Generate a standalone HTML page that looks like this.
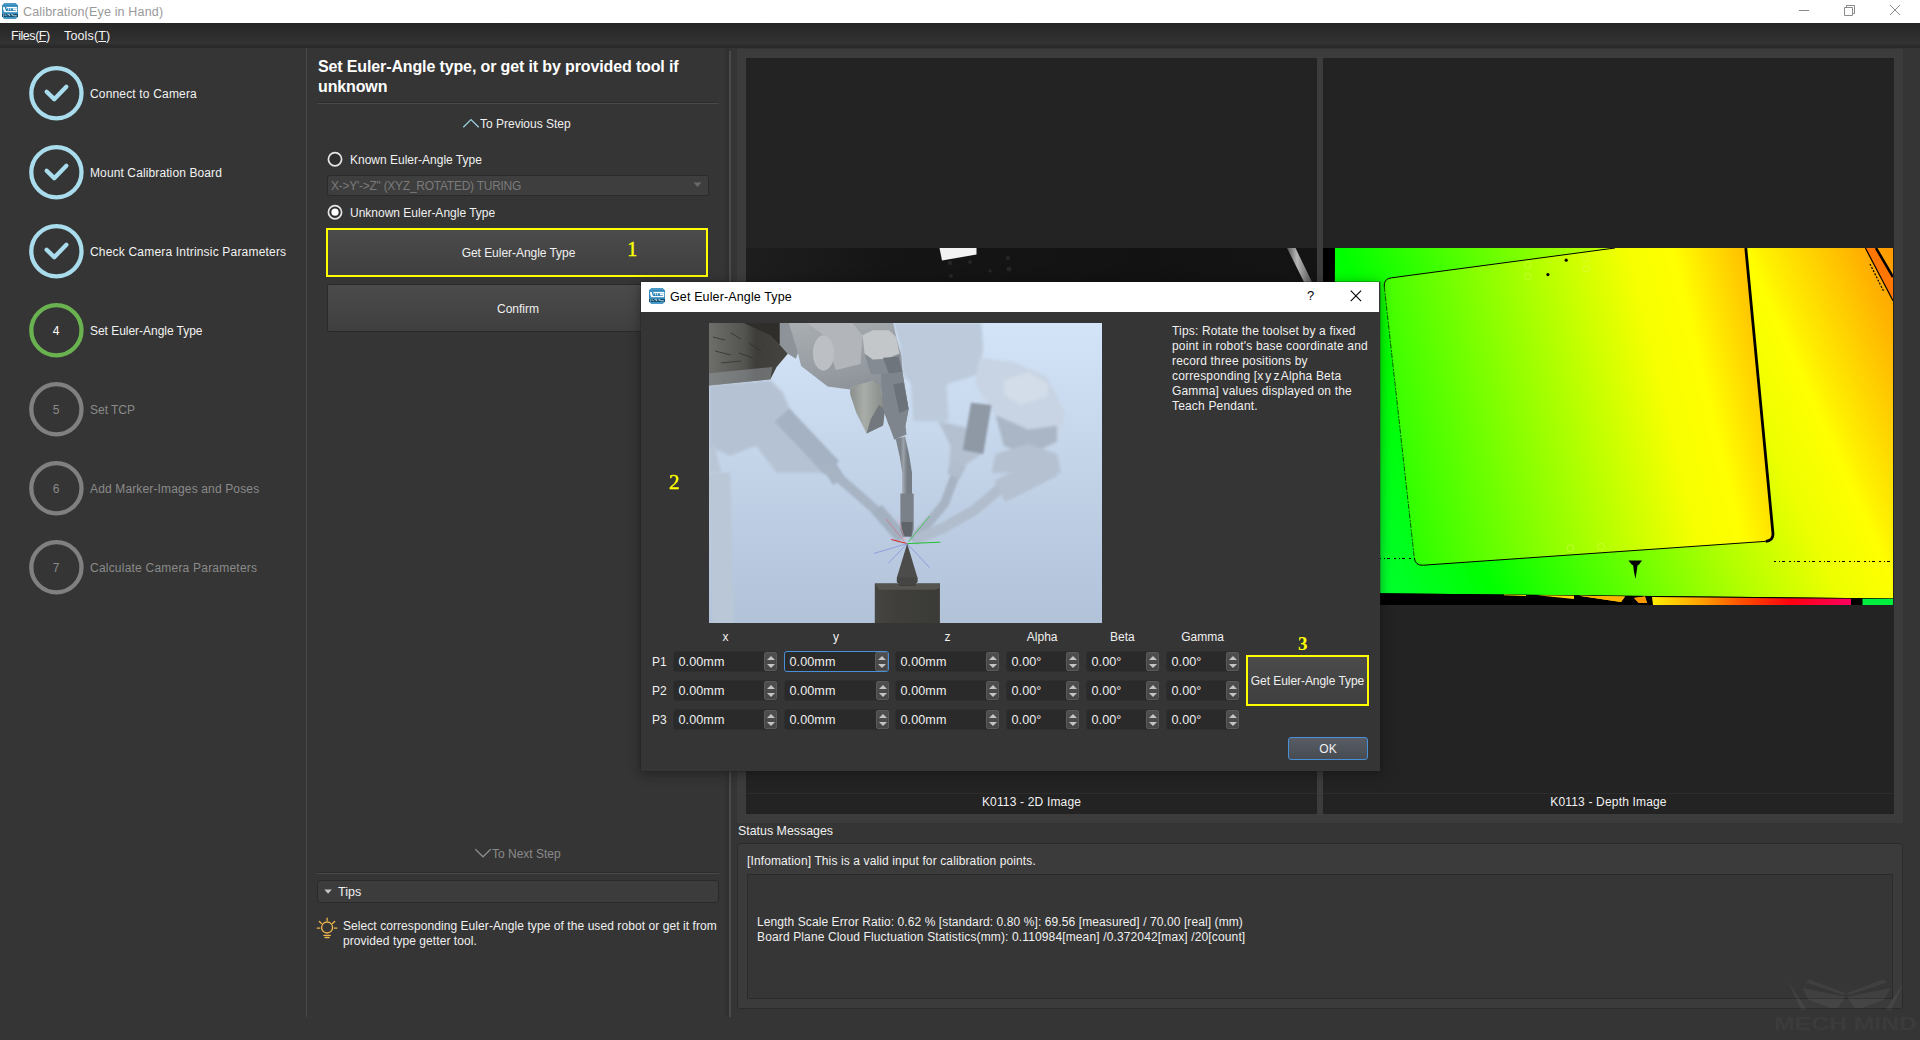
<!DOCTYPE html>
<html>
<head>
<meta charset="utf-8">
<title>Calibration(Eye in Hand)</title>
<style>
*{box-sizing:border-box;margin:0;padding:0}
html,body{width:1920px;height:1040px;overflow:hidden;background:#353535}
body{font-family:"Liberation Sans",sans-serif;font-size:12px;color:#f0f0f0;position:relative}
.abs{position:absolute}
.t{position:absolute;white-space:nowrap;line-height:14px}
#titlebar{left:0;top:0;width:1920px;height:23px;background:#fff}
#menubar{left:0;top:23px;width:1920px;height:25px;background:linear-gradient(#252525 0,#2b2b2b 35%,#323232 84%,#2c2c2c 88%,#292929 100%)}
.step-label{left:90px;color:#f2f2f2}
.step-label.dim{color:#8a8a8a}
.btn{position:absolute;background:linear-gradient(#4b4b4b,#3f3f3f);border:1px solid #2a2a2a;border-radius:2px;color:#f0f0f0;text-align:center}
.spin{position:absolute;height:21px;background:#2a2a2a;border:1px solid #2f2f2f;border-radius:3px}
.spin .v{position:absolute;left:4.5px;top:3px;line-height:14px;font-size:12.6px;letter-spacing:0.08px;color:#f0f0f0}
.spin .b{position:absolute;right:-1px;top:0;width:13px;height:19px;background:linear-gradient(#4e4e4e,#464646);border:1px solid #5a5a5a;border-radius:2px}
.spin .b:before{content:"";position:absolute;left:1.5px;top:3px;border:4px solid transparent;border-top:0;border-bottom:4px solid #c4c4c4}
.spin .b:after{content:"";position:absolute;left:1.5px;top:11px;border:4px solid transparent;border-bottom:0;border-top:4px solid #c4c4c4}
</style>
</head>
<body>
<!-- TITLE BAR -->
<div id="titlebar" class="abs">
<svg class="abs" style="left:2px;top:3px" width="16" height="16" viewBox="0 0 16 16"><path d="M2.6 0h10.800L16 2.600v10.800L13.400 16H2.600L0 13.400V2.600z" fill="#3389bb"/><path d="M2.600 0h10.800l2 2H.600z" fill="#4b99c7"/><path d="M.500 14.300h15L13.400 16H2.600z" fill="#4b99c7"/><rect x="0" y="11" width="16" height="2.900" fill="#0c4c6e"/><path d="M1.200 11.600l1 .800-1 .900M3.200 11.500l1.200 1.600M5.500 11.700h2.200v1.400M9.300 11.800h1.800v1.200M11.800 12.800h3" stroke="#fff" stroke-width=".800" fill="none"/><rect x="1.100" y="3.900" width="14.100" height="5.300" fill="#fff"/><path d="M1.100 6.200v3h1.300z" fill="#3389bb"/><path d="M2.700 3.900l.900 3.600 1-3.600z" fill="#3389bb"/><path d="M4.500 5.300l-.800 2.800h10.400v-.800H11V5.300z" fill="#3389bb"/><path d="M6 5.300v1.900h.800V5.300zM8.100 5.300v1.900h.800V5.300z" fill="#eaf3f9"/><rect x="11.200" y="5.300" width="4" height=".700" fill="#9cc5de"/></svg>
<div class="t" style="left:23px;top:5px;font-size:12.5px;letter-spacing:0.17px;color:#999">Calibration(Eye in Hand)</div>
<svg class="abs" style="left:1780px;top:0" width="140" height="23" viewBox="0 0 140 23"><g stroke="#8a8a8a" stroke-width="1" fill="none"><path d="M19 10.5h10"/><path d="M64.5 7.5h8v8h-8z M66.5 7.5v-2h8v8h-2"/><path d="M110 5l10 10M120 5l-10 10"/></g></svg>
</div>
<!-- MENU BAR -->
<div id="menubar" class="abs">
<div class="t" style="left:11px;top:6px;font-size:12.5px;letter-spacing:-0.45px;color:#f4f4f4">Files(<u>F</u>)</div>
<div class="t" style="left:64px;top:6px;font-size:12.5px;letter-spacing:0.15px;color:#f4f4f4">Tools(<u>T</u>)</div>
</div>
<!-- LEFT STEPS -->
<div id="steps">
<svg class="abs" style="left:0;top:48px" width="306" height="992" viewBox="0 48 306 992">
<circle cx="56.4" cy="93.2" r="25.1" fill="none" stroke="#a9dcec" stroke-width="4.3"/><path d="M46.65 91.75L54.25 99.15L66.35 86.85" fill="none" stroke="#a9dcec" stroke-width="4.3" stroke-linecap="round" stroke-linejoin="round"/>
<circle cx="56.4" cy="172.2" r="25.1" fill="none" stroke="#a9dcec" stroke-width="4.3"/><path d="M46.65 170.75L54.25 178.15L66.35 165.85" fill="none" stroke="#a9dcec" stroke-width="4.3" stroke-linecap="round" stroke-linejoin="round"/>
<circle cx="56.4" cy="251.2" r="25.1" fill="none" stroke="#a9dcec" stroke-width="4.3"/><path d="M46.65 249.75L54.25 257.15L66.35 244.85" fill="none" stroke="#a9dcec" stroke-width="4.3" stroke-linecap="round" stroke-linejoin="round"/>
<circle cx="56.4" cy="330.2" r="25.1" fill="none" stroke="#6ab150" stroke-width="4.3"/>
<circle cx="56.4" cy="409.2" r="25.1" fill="none" stroke="#808080" stroke-width="4.3"/>
<circle cx="56.4" cy="488.2" r="25.1" fill="none" stroke="#808080" stroke-width="4.3"/>
<circle cx="56.4" cy="567.2" r="25.1" fill="none" stroke="#808080" stroke-width="4.3"/>
</svg>
<div class="t step-label" style="top:87px;letter-spacing:0.167px">Connect to Camera</div>
<div class="t step-label" style="top:166px;letter-spacing:0.113px">Mount Calibration Board</div>
<div class="t step-label" style="top:245px;letter-spacing:0.188px">Check Camera Intrinsic Parameters</div>
<div class="t" style="left:46px;width:20px;text-align:center;top:324px;color:#fff">4</div>
<div class="t step-label" style="top:324px;letter-spacing:-0.034px">Set Euler-Angle Type</div>
<div class="t" style="left:46px;width:20px;text-align:center;top:403px;color:#8a8a8a">5</div>
<div class="t step-label dim" style="top:403px;letter-spacing:-0.020px">Set TCP</div>
<div class="t" style="left:46px;width:20px;text-align:center;top:482px;color:#8a8a8a">6</div>
<div class="t step-label dim" style="top:482px;letter-spacing:0.144px">Add Marker-Images and Poses</div>
<div class="t" style="left:46px;width:20px;text-align:center;top:561px;color:#8a8a8a">7</div>
<div class="t step-label dim" style="top:561px;letter-spacing:0.215px">Calculate Camera Parameters</div>
<div class="abs" style="left:306px;top:48px;width:1px;height:969px;background:#484848"></div>
</div>
<!-- MIDDLE PANEL -->
<div id="mid">
<div class="t" style="left:318px;top:57px;font-size:16px;font-weight:bold;line-height:20px;letter-spacing:-0.13px;color:#fff;white-space:normal;width:400px">Set Euler-Angle type, or get it by provided tool if unknown</div>
<div class="abs" style="left:317px;top:102px;width:402px;height:1px;background:#2d2d2d"></div>
<div class="abs" style="left:317px;top:103px;width:402px;height:1px;background:#4a4a4a"></div>
<svg class="abs" style="left:462px;top:117px" width="18" height="12" viewBox="0 0 18 12"><path d="M1.3 10.2L9 2.6l7.7 7.6" fill="none" stroke="#9ccfe0" stroke-width="1.3"/></svg>
<div class="t" style="left:480px;top:117px">To Previous Step</div>
<svg class="abs" style="left:326px;top:150px" width="18" height="72" viewBox="0 0 18 72"><circle cx="9" cy="9.2" r="6.6" fill="#2e2e2e" stroke="#e6e6e6" stroke-width="1.7"/><circle cx="9" cy="62.2" r="6.6" fill="#2e2e2e" stroke="#e6e6e6" stroke-width="1.7"/><circle cx="9" cy="62.2" r="3.6" fill="#fff"/></svg>
<div class="t" style="left:350px;top:153px">Known Euler-Angle Type</div>
<div class="abs" style="left:327px;top:175px;width:382px;height:21px;background:#3e3e3e;border:1px solid #2a2a2a;border-radius:3px"></div>
<div class="t" style="left:331px;top:179px;color:#7a7a7a;letter-spacing:-0.26px">X-&gt;Y'-&gt;Z" (XYZ_ROTATED) TURING</div>
<svg class="abs" style="left:693px;top:182px" width="10" height="6" viewBox="0 0 10 6"><path d="M0.5 0.5h8L4.5 5z" fill="#6a6a6a"/></svg>
<div class="t" style="left:350px;top:206px">Unknown Euler-Angle Type</div>
<div class="abs" style="left:326px;top:228px;width:382px;height:49px;background:linear-gradient(#4b4b4b,#3f3f3f);border:2px solid #ffff00"></div>
<div class="t" style="left:327.500px;width:382px;text-align:center;top:246px;letter-spacing:-0.040px">Get Euler-Angle Type</div>
<div class="t" id="n1" style="left:627.300px;top:239.200px;font-family:'Liberation Serif',serif;font-size:20px;line-height:20px;color:#ffff00;-webkit-text-stroke:0.450px #ffff00">1</div>
<div class="btn" style="left:327px;top:284px;width:382px;height:48px"></div>
<div class="t" style="left:327px;width:382px;text-align:center;top:302px">Confirm</div>
<svg class="abs" style="left:474px;top:847px" width="18" height="12" viewBox="0 0 18 12"><path d="M1.3 2.2L9 9.8l7.7-7.6" fill="none" stroke="#8c8c8c" stroke-width="1.3"/></svg>
<div class="t" style="left:492px;top:847px;color:#8a8a8a">To Next Step</div>
<div class="abs" style="left:317px;top:872px;width:402px;height:1px;background:#2d2d2d"></div>
<div class="abs" style="left:317px;top:873px;width:402px;height:1px;background:#4a4a4a"></div>
<div class="abs" style="left:317.400px;top:880.400px;width:401.300px;height:22.300px;background:#3c3c3c;border:1px solid #292929;border-radius:3.500px"></div>
<svg class="abs" style="left:324px;top:889px" width="9" height="6" viewBox="0 0 9 6"><path d="M0.3 0.5h7.6L4.1 4.8z" fill="#c4c4c4"/></svg>
<div class="t" style="left:338px;top:885px;font-size:12.5px">Tips</div>
<svg class="abs" style="left:316px;top:917px" width="22" height="22" viewBox="0 0 22 22" fill="none" stroke="#ecb54e" stroke-width="1.300" stroke-linecap="round"><circle cx="11.100" cy="10.500" r="5.500"/><path d="M7.900 18.300h6.400M9.100 20.500h4M11.100 1.200v2.200M3.300 4.400l2.200 2M18.700 4.400l-2.200 2M1.200 11.100h2.600M18.300 11.100h2.600"/></svg>
<div class="t" style="left:343px;top:919px;line-height:15px;white-space:normal;width:384px;letter-spacing:0.07px">Select corresponding Euler-Angle type of the used robot or get it from provided type getter tool.</div>
<div class="abs" style="left:723px;top:48px;width:6px;height:969px;background:linear-gradient(90deg,#353535,#2f2f2f)"></div>
<div class="abs" style="left:729px;top:51px;width:2px;height:966px;background:#4a4a4a"></div>
</div>
<!-- RIGHT PANEL -->
<div id="right">
<div class="abs" style="left:737px;top:49px;width:1166px;height:774px;background:#3c3c3c"></div>
<div class="abs" id="pane2d" style="left:746px;top:58px;width:571px;height:756px;background:#232323;overflow:hidden">
<svg class="abs" style="left:0;top:190px" width="571" height="357" viewBox="0 0 571 357">
<defs><linearGradient id="g2" x1="0" y1="0" x2="1" y2="0"><stop offset="0" stop-color="#1e1e1e"/><stop offset="0.25" stop-color="#151515"/><stop offset="0.7" stop-color="#121212"/><stop offset="1" stop-color="#141414"/></linearGradient>
<linearGradient id="gr" x1="0" y1="0" x2="1" y2="0"><stop offset="0" stop-color="#555"/><stop offset="0.4" stop-color="#b8b8b8"/><stop offset="1" stop-color="#5a5a5a"/></linearGradient></defs>
<rect width="571" height="357" fill="url(#g2)"/>
<path d="M193.500 0H230.500V6.500L196 12.500z" fill="#f2f2f2"/>
<g fill="#262626"><circle cx="204" cy="15" r="2.200"/><circle cx="224" cy="14" r="2"/><circle cx="262" cy="10" r="2.200"/><circle cx="244" cy="23" r="1.800"/><circle cx="205" cy="28" r="2"/><circle cx="263" cy="21" r="2.500"/></g>
<path d="M541 0h8.500L566 34h-8z" fill="url(#gr)"/>
</svg>
<div class="abs" style="left:0;top:735px;width:571px;height:1px;background:#2c2c2c"></div>
<div class="t" style="left:0;width:571px;text-align:center;top:737px;color:#f2f2f2;letter-spacing:0.17px">K0113 - 2D Image</div>
</div>
<div class="abs" id="panedepth" style="left:1323px;top:58px;width:571px;height:756px;background:#232323;overflow:hidden">
<svg class="abs" id="depthimg" style="left:0;top:190px" width="570" height="357" viewBox="0 0 570 357">
<defs>
<linearGradient id="gd" gradientUnits="userSpaceOnUse" x1="-182.7" y1="81.3" x2="475" y2="-211.5"><stop offset="0" stop-color="#00ff70"/><stop offset="0.157" stop-color="#00ff30"/><stop offset="0.2986" stop-color="#00ff00"/><stop offset="0.6125" stop-color="#b0ff00"/><stop offset="0.736" stop-color="#edff00"/><stop offset="0.8125" stop-color="#ffff00"/><stop offset="0.836" stop-color="#fff000"/><stop offset="0.915" stop-color="#ffc700"/><stop offset="1" stop-color="#ff9900"/></linearGradient>
<linearGradient id="gb" gradientUnits="userSpaceOnUse" x1="-145.8" y1="35" x2="456.8" y2="-109.5"><stop offset="0" stop-color="#00ff30"/><stop offset="0.169" stop-color="#00ff00"/><stop offset="0.721" stop-color="#f7ff00"/><stop offset="0.79" stop-color="#ffff00"/><stop offset="0.895" stop-color="#ffc400"/><stop offset="1" stop-color="#ff8c00"/></linearGradient>
<linearGradient id="gs" x1="0" y1="0" x2="1" y2="0">
<stop offset="0" stop-color="#ffee00"/><stop offset="0.25" stop-color="#ffa000"/><stop offset="0.45" stop-color="#ff5000"/><stop offset="0.7" stop-color="#ff0010"/><stop offset="1" stop-color="#ff0060"/>
</linearGradient>
</defs>
<rect width="570" height="357" fill="#000"/>
<path d="M11.5 0H570V351L0 345.5V357H11z" fill="#000"/>
<path d="M12 0H570V350.5L56 345.2 10.5 345z" fill="url(#gd)"/>
<path d="M292 0L68.300 29.850Q60.400 30.900 61.300 38.850L91.300 309.800Q92.200 317.750 100.200 317.200L442.700 293.350Q450.700 292.800 449.900 284.800L422.800 0z" fill="url(#gb)"/>
<path d="M292 0L68.300 29.850Q60.400 30.900 61.300 38.850" stroke="#000" stroke-width="1" fill="none"/>
<path d="M61.300 38.850L91.300 309.800" stroke="#062800" stroke-width="0.900" stroke-dasharray="5 1.500 2 1" fill="none" opacity="0.850"/>
<path d="M91.300 309.800Q92.200 317.750 100.200 317.200L442.700 293.350" stroke="#000" stroke-width="1" fill="none"/>
<path d="M442.700 293.350Q450.700 292.800 449.900 284.800L422.800 0" stroke="#000" stroke-width="2.800" fill="none"/>
<path d="M56 310.500h37M451 313.500h119" stroke="#000" stroke-width="1" stroke-dasharray="2 3 1 2 3 4"/>
<path d="M305.500 312.500h13.500l-3 4-1.500 1-1 7-1 6.500-1.500-7-.8-6.500-2-1.500z" fill="#000"/>
<circle cx="224.900" cy="26.600" r="1.600" fill="#000"/><circle cx="243.200" cy="12.200" r="1.600" fill="#000"/>
<g fill="none" stroke="#d8ff50" stroke-width="0.800" opacity="0.700"><circle cx="204.700" cy="17" r="3.300"/><circle cx="204.700" cy="28.500" r="3.300"/><circle cx="262.400" cy="10.300" r="3.300"/><circle cx="263.300" cy="20.800" r="3.300"/><circle cx="247.500" cy="300.300" r="3.500"/><circle cx="278" cy="298.700" r="3.500"/></g>
<path d="M542.400 0L570 52.800V29L553 0z" fill="#ff7600"/>
<path d="M542.400 0L570 52.800" stroke="#000" stroke-width="1.200"/><path d="M553 0L570 29" stroke="#000" stroke-width="2.500"/><path d="M547 16l14 28" stroke="#000" stroke-width="1.200" stroke-dasharray="2 1.500"/>
<path d="M56 345.200L570 350.500V357H56z" fill="#000"/>
<path d="M181 346.500l22 .500v1l-22-.800zM214 347.200l37 .600v3.200zM256 347.800l46 .600-4 5.500zM311 350l11-1.500 2 6.500h-8z" fill="#ffd800"/>
<path d="M256 347.800l46 .600-4 5.500z" fill="#ffb400"/><path d="M311 350l11-1.500 2 6.500h-8z" fill="#ff9800"/>
<path d="M329 349l199 1.800V357H330z" fill="url(#gs)"/>
<rect x="528" y="350.500" width="11.500" height="6.500" fill="#000"/>
<rect x="539.500" y="350.800" width="30.500" height="6.200" fill="#00f040"/>
</svg>
<div class="abs" style="left:0;top:735px;width:571px;height:1px;background:#2c2c2c"></div>
<div class="t" style="left:0;width:571px;text-align:center;top:737px;color:#f2f2f2;letter-spacing:0.17px">K0113 - Depth Image</div>
</div>
<div class="t" style="left:738px;top:824px;font-size:12.4px">Status Messages</div>
<div class="abs" style="left:737px;top:843px;width:1166px;height:166px;background:#3b3b3b;border:1px solid #2b2b2b;border-radius:3px"></div>
<div class="t" style="left:747px;top:854px;letter-spacing:0.12px">[Infomation] This is a valid input for calibration points.</div>
<div class="abs" style="left:747px;top:874px;width:1146px;height:125px;background:#363636;border:1px solid #2a2a2a"></div>
<div class="t" style="left:757px;top:915px;line-height:15px;letter-spacing:0.094px">Length Scale Error Ratio: 0.62 % [standard: 0.80 %]: 69.56 [measured] / 70.00 [real] (mm)</div>
<div class="t" style="left:757px;top:930px;line-height:15px;letter-spacing:0.135px">Board Plane Cloud Fluctuation Statistics(mm): 0.110984[mean] /0.372042[max] /20[count]</div>
<svg class="abs" style="left:1760px;top:960px" width="160" height="80" viewBox="0 0 160 80" fill="rgba(255,255,255,0.05)">
<path d="M27.500 20.800L46.700 49.200 41.700 50.800zM49.200 19.200L85.800 33.300 83.300 35 45.800 22.500zM42.500 27.900L85.800 36.700 77.500 48.300 71 48.300 48 39.500z"/>
<path d="M145 20.800L125.800 49.200 130.800 50.800zM123.300 19.200L86.700 33.300 89.200 35 126.700 22.500zM130 27.900L86.700 36.700 95 48.300 101.500 48.300 124.500 39.500z"/>
<text x="14" y="70.300" font-family="Liberation Sans, sans-serif" font-weight="bold" font-size="17.500" textLength="143" lengthAdjust="spacingAndGlyphs">MECH MIND</text>
<text x="55" y="79.500" font-family="Liberation Sans, sans-serif" font-size="5" textLength="62" lengthAdjust="spacingAndGlyphs" fill="rgba(255,255,255,0.03)">Robotics Technologies</text>
</svg>
</div>
<!-- DIALOG -->
<div id="dialog">
<div class="abs" style="left:641px;top:282px;width:738.500px;height:489.300px;background:#353535;box-shadow:0 0 0 0.500px rgba(30,30,30,0.500),0 2px 11px 1px rgba(0,0,0,0.340)"></div>
<div class="abs" style="left:641px;top:282px;width:738px;height:30px;background:#fff"></div>
<svg class="abs" style="left:649px;top:288px" width="16" height="16" viewBox="0 0 16 16"><path d="M2.6 0h10.800L16 2.600v10.800L13.400 16H2.600L0 13.400V2.600z" fill="#3389bb"/><path d="M2.600 0h10.800l2 2H.600z" fill="#4b99c7"/><path d="M.500 14.300h15L13.400 16H2.600z" fill="#4b99c7"/><rect x="0" y="11" width="16" height="2.900" fill="#0c4c6e"/><path d="M1.200 11.600l1 .800-1 .900M3.200 11.500l1.200 1.600M5.500 11.700h2.200v1.400M9.300 11.800h1.800v1.200M11.800 12.800h3" stroke="#fff" stroke-width=".800" fill="none"/><rect x="1.100" y="3.900" width="14.100" height="5.300" fill="#fff"/><path d="M1.100 6.200v3h1.300z" fill="#3389bb"/><path d="M2.700 3.900l.900 3.600 1-3.600z" fill="#3389bb"/><path d="M4.500 5.300l-.800 2.800h10.400v-.800H11V5.300z" fill="#3389bb"/><path d="M6 5.300v1.900h.800V5.300zM8.100 5.300v1.900h.800V5.300z" fill="#eaf3f9"/><rect x="11.200" y="5.300" width="4" height=".700" fill="#9cc5de"/></svg>
<div class="t" style="left:670px;top:290px;font-size:12.5px;letter-spacing:0.13px;color:#000">Get Euler-Angle Type</div>
<div class="t" style="left:1307px;top:289px;font-size:13px;color:#000">?</div>
<svg class="abs" style="left:1350px;top:290px" width="12" height="12" viewBox="0 0 12 12"><path d="M0.7 0.7l10.4 10.4M11.1 0.7L0.7 11.1" stroke="#000" stroke-width="1.1"/></svg>
<svg class="abs" id="robot" style="left:709px;top:323px" width="393" height="300" viewBox="0 0 393 300">
<defs>
<linearGradient id="rbg" x1="0" y1="0" x2="0" y2="1"><stop offset="0" stop-color="#d3e3f8"/><stop offset="0.45" stop-color="#c4d5ea"/><stop offset="1" stop-color="#b1c2d9"/></linearGradient>
<linearGradient id="arm" x1="0" y1="0" x2="0.3" y2="1"><stop offset="0" stop-color="#a9aeb3"/><stop offset="0.5" stop-color="#979ca2"/><stop offset="1" stop-color="#80868d"/></linearGradient>
<linearGradient id="tube" x1="0" y1="0" x2="1" y2="0"><stop offset="0" stop-color="#7e848c"/><stop offset="0.45" stop-color="#9ba1a9"/><stop offset="1" stop-color="#767c84"/></linearGradient>
<linearGradient id="cyl" x1="0" y1="0" x2="1" y2="0"><stop offset="0" stop-color="#8a8f8c"/><stop offset="0.4" stop-color="#a9ada8"/><stop offset="1" stop-color="#858a88"/></linearGradient>
<linearGradient id="box" x1="0" y1="0" x2="1" y2="0"><stop offset="0" stop-color="#454542"/><stop offset="0.3" stop-color="#403f3c"/><stop offset="1" stop-color="#3a3a37"/></linearGradient>
<linearGradient id="blk" x1="0" y1="0" x2="1" y2="0"><stop offset="0" stop-color="#6d6d69"/><stop offset="0.45" stop-color="#53534f"/><stop offset="0.6" stop-color="#3e3d3a"/><stop offset="1" stop-color="#45443f"/></linearGradient>
<filter id="b1" x="-10%" y="-10%" width="120%" height="120%"><feGaussianBlur stdDeviation="0.9"/></filter>
<filter id="b2" x="-10%" y="-10%" width="120%" height="120%"><feGaussianBlur stdDeviation="1.8"/></filter>
</defs>
<rect width="393" height="300" fill="url(#rbg)"/>
<g filter="url(#b2)">
<path d="M184.2 0.0L272.3 0.0L274.3 24.6L270.2 51.2L237.5 61.4L239.5 98.3L204.7 98.3L201.6 59.4L193.4 51.2L190.4 20.5z" fill="#bccadb"/>
<path d="M270.2 34.8L303.0 38.9L337.8 53.2L356.2 90.1L348.0 118.7L319.3 132.0L294.8 122.8L286.6 92.1L266.1 61.4z" fill="#c8d4e3"/>
<path d="M294.8 57.3L319.3 49.1L339.8 61.4L337.8 73.7L311.2 81.9L294.8 71.6z" fill="#d3dde9"/>
<path d="M286.6 92.1L319.3 106.4L348.0 102.4L348.0 118.7L319.3 132.0L294.8 122.8z" fill="#aab6c5"/>
<path d="M229.3 98.3L266.1 106.4L272.3 131.0L245.6 150.1L239.5 150.1L241.6 122.8z" fill="#b4c0cf"/>
<path d="M286.6 131.0L319.3 120.8L348.0 131.0L352.1 150.1L335.7 150.1L303.0 150.1L282.5 150.1z" fill="#b5c1d0"/>
<path d="M0.0 61.4L61.4 57.3L73.7 69.6L86.0 98.3L118.7 131.0L131.0 150.1L67.6 150.1L47.1 122.8L20.5 133.1L0.0 122.8z" fill="#b5c2d3"/>
<path d="M0.0 122.8L6.1 122.8L12.3 150.1L0.0 150.1z" fill="#b9c6d6"/>
</g>
<g filter="url(#b1)" fill="none">
<path d="M10.2 150.0L14.3 300.1" stroke="#bac7d7" stroke-width="22"/>
<path d="M73 92L123 145" stroke="#a5b2c3" stroke-width="20"/>
<path d="M118 140L130 158" stroke="#a5b2c3" stroke-width="14"/>
<path d="M114.6 141.8L143.3 166.4L169.9 189.9" stroke="#a7b4c4" stroke-width="9.500"/>
<path d="M167.9 186.4L193.4 215.5" stroke="#a3b0c0" stroke-width="13"/>
<path d="M248.7 145.9L235.4 180.7L221.1 198.1L202.7 217.1" stroke="#a7b3c3" stroke-width="9"/>
<path d="M294.8 162.3L266.1 186.8L235.4 204.2L205.7 217.1" stroke="#b1bdcc" stroke-width="10.500"/>
<path d="M343.9 141.8L290.7 168.4" stroke="#b5c1d0" stroke-width="24"/>
<path d="M241.6 143.9L253.8 150.0" stroke="#b1bdcc" stroke-width="14"/>
</g>
<path d="M262.0 79.8L282.5 81.9L274.3 131.0L253.8 126.9z" fill="#8f99a6" filter="url(#b1)"/>
<path d="M70.6 0.0L98.3 0.0L90.1 26.6L87.0 35.8L78.8 30.7L70.6 21.5z" fill="#8d9399"/>
<path d="M0.0 0.0L70.6 0.0L70.6 21.5L78.8 30.7L67.6 44.0L61.4 56.3L0.0 62.4z" fill="url(#blk)"/>
<path d="M34.8 0.0L70.6 0.0L70.6 21.5L61.4 12.3z" fill="#2f2e2b"/>
<path d="M0.0 50.2L63.5 44.0L61.4 56.3L0.0 62.4z" fill="#8f959b" opacity="0.55"/>
<g stroke="#2c2c29" stroke-width="1" opacity="0.7"><path d="M4 14l12 3M6 28l16 4M22 10l10 6M30 30l14 5M12 40l20-2M40 20l12 8"/></g>
<path d="M79.8 0.0L184.2 0.0L187.3 14.3L192.4 32.8L193.4 49.1L199.6 86.0L196.5 102.4L185.3 107.5L180.1 102.4L174.0 86.0L172.0 67.6L163.8 58.3L144.3 63.5L141.2 66.5L118.7 63.5L92.1 43.0L88.0 26.6z" fill="url(#arm)"/>
<ellipse cx="114.500" cy="30" rx="10.500" ry="17.500" fill="#b7bbbf"/>
<path d="M98.3 0.0L143.3 0.0L153.5 12.3L151.5 40.9L126.9 47.1L114.6 12.3z" fill="#b2b6ba"/>
<ellipse cx="114.500" cy="30" rx="10.500" ry="17.500" fill="#bcc0c4"/>
<path d="M153.5 12.3L163.8 7.2L180.1 7.2L187.3 14.3L190.4 30.7L178.1 35.8L163.8 36.8L155.6 30.7z" fill="#c4c7c9"/>
<path d="M155.6 30.7L163.8 36.8L178.1 35.8L190.4 30.7L193.4 49.1L172.0 51.2L161.7 51.2z" fill="#858b92"/>
<path d="M174.0 34.8L189.4 33.8L193.4 49.1L180.1 51.2z" fill="#6f757c"/>
<path d="M141.2 66.5L145.3 62.4L163.8 58.3L170.9 63.5L176.0 86.0L174.0 102.4L157.6 110.5L147.4 90.1L141.2 71.6z" fill="url(#cyl)"/>
<path d="M157.6 110.5L174.0 102.4L176.0 86.0L169.9 81.9L161.7 96.2z" fill="#72787d"/>
<path d="M172.0 51.2L193.4 49.1L199.6 86.0L196.5 102.4L197.5 111.6L185.3 116.7L180.1 102.4L174.0 86.0z" fill="#7f858c"/>
<path d="M184.2 61.4L194.5 59.4L199.6 86.0L190.4 90.1z" fill="#6c7279"/>
<path d="M191.4 114.6L195.5 133.1L198.2 150.1L198.2 174.0" fill="none" stroke="url(#tube)" stroke-width="9.600"/>
<path d="M191.400 170.500h13.300v36l-2.200 7h-8.500l-2.600-7z" fill="#7b8189"/>
<path d="M192.600 199l1.400 14.500h8.500l1.200-14.500z" fill="#5f646b"/>
<g fill="none" stroke-width="0.800"><path d="M182.200 216.500L198.200 220.600" stroke="#e02020" stroke-width="1"/><path d="M198.200 220.600L231.300 219.200" stroke="#22c032" stroke-width="1"/><path d="M199.600 218.600L220.700 193" stroke="#35c045"/><path d="M164.800 230.500L198.200 220.600 220.700 244.800M179.100 240.500L198.200 220.600" stroke="#8593da"/><path d="M177.100 196L195.500 218.600" stroke="#e05060" stroke-width="0.500"/><path d="M188.300 195l8.200 22.500" stroke="#f0a0b0" stroke-width="0.500"/></g>
<path d="M198.200 220.600L208.400 254.400V259l-3 2.600h-14.500l-3-2.600v-4.600z" fill="#4c4c4b"/>
<path d="M165.800 260.500h65.100V300h-65.100z" fill="url(#box)"/>
<path d="M165.800 260.500h22.100v0l3 2.400h14.500l3-2.400h22.500v4l-4 2.200H170z" fill="#55544f"/>
<path d="M187.900 254.400h20.500V259l-3 2.900h-14.500l-3-2.900z" fill="#454544"/>
</svg>
<div class="t" id="n2" style="left:668.600px;top:471.800px;font-family:'Liberation Serif',serif;font-size:20px;line-height:20px;color:#ffff00;-webkit-text-stroke:0.450px #ffff00;transform:scaleX(1.06);transform-origin:left">2</div>
<div class="t" style="left:1172px;top:324px;line-height:15px;letter-spacing:0.17px;white-space:normal;width:205px">Tips: Rotate the toolset by a fixed point in robot's base coordinate and record three positions by corresponding <span style="word-spacing:-1.6px">[x y z Alpha</span> Beta Gamma] values displayed on the Teach Pendant.</div>
<div class="t" style="left:695.5px;width:60px;text-align:center;top:630px">x</div>
<div class="t" style="left:806.0px;width:60px;text-align:center;top:630px">y</div>
<div class="t" style="left:917.4px;width:60px;text-align:center;top:630px">z</div>
<div class="t" style="left:1012.2px;width:60px;text-align:center;top:630px">Alpha</div>
<div class="t" style="left:1092.3px;width:60px;text-align:center;top:630px">Beta</div>
<div class="t" style="left:1172.5px;width:60px;text-align:center;top:630px">Gamma</div>
<div class="t" style="left:652px;top:655px;font-size:12px">P1</div>
<div class="spin" style="left:673px;top:651px;width:104px"><span class="v">0.00mm</span><span class="b"></span></div>
<div class="spin" style="left:784px;top:651px;width:105px;border-color:#4a90d9"><span class="v">0.00mm</span><span class="b" style="right:0"></span></div>
<div class="spin" style="left:895px;top:651px;width:104px"><span class="v">0.00mm</span><span class="b"></span></div>
<div class="spin" style="left:1006px;top:651px;width:73px"><span class="v">0.00°</span><span class="b"></span></div>
<div class="spin" style="left:1086px;top:651px;width:73px"><span class="v">0.00°</span><span class="b"></span></div>
<div class="spin" style="left:1166px;top:651px;width:73px"><span class="v">0.00°</span><span class="b"></span></div>
<div class="t" style="left:652px;top:684px;font-size:12px">P2</div>
<div class="spin" style="left:673px;top:680px;width:104px"><span class="v">0.00mm</span><span class="b"></span></div>
<div class="spin" style="left:784px;top:680px;width:105px"><span class="v">0.00mm</span><span class="b"></span></div>
<div class="spin" style="left:895px;top:680px;width:104px"><span class="v">0.00mm</span><span class="b"></span></div>
<div class="spin" style="left:1006px;top:680px;width:73px"><span class="v">0.00°</span><span class="b"></span></div>
<div class="spin" style="left:1086px;top:680px;width:73px"><span class="v">0.00°</span><span class="b"></span></div>
<div class="spin" style="left:1166px;top:680px;width:73px"><span class="v">0.00°</span><span class="b"></span></div>
<div class="t" style="left:652px;top:713px;font-size:12px">P3</div>
<div class="spin" style="left:673px;top:709px;width:104px"><span class="v">0.00mm</span><span class="b"></span></div>
<div class="spin" style="left:784px;top:709px;width:105px"><span class="v">0.00mm</span><span class="b"></span></div>
<div class="spin" style="left:895px;top:709px;width:104px"><span class="v">0.00mm</span><span class="b"></span></div>
<div class="spin" style="left:1006px;top:709px;width:73px"><span class="v">0.00°</span><span class="b"></span></div>
<div class="spin" style="left:1086px;top:709px;width:73px"><span class="v">0.00°</span><span class="b"></span></div>
<div class="spin" style="left:1166px;top:709px;width:73px"><span class="v">0.00°</span><span class="b"></span></div>
<div class="t" id="n3" style="left:1298px;top:634px;font-family:'Liberation Serif',serif;font-weight:bold;font-size:19px;line-height:20px;color:#ffff00">3</div>
<div class="abs" style="left:1246px;top:655px;width:123px;height:51px;background:linear-gradient(#4b4b4b,#3f3f3f);border:2px solid #ffff00"></div>
<div class="t" style="left:1246px;width:123px;text-align:center;top:674px;letter-spacing:-0.05px">Get Euler-Angle Type</div>
<div class="abs" style="left:1288px;top:737px;width:80px;height:23px;background:linear-gradient(#585d65,#474b52);border:1px solid #4a90d9;border-radius:3px"></div>
<div class="t" style="left:1288px;width:80px;text-align:center;top:742px">OK</div>
</div>
</body>
</html>
